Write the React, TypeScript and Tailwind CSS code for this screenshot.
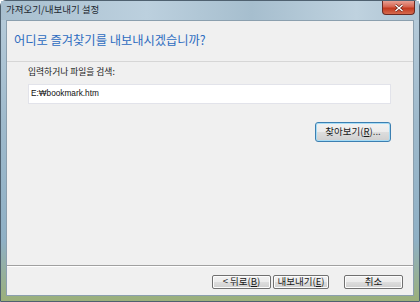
import React from 'react';

const font = { fontFamily: '"Noto Sans CJK KR", "Liberation Sans", sans-serif' };

type BtnProps = { children: React.ReactNode; width: string; focused?: boolean };

const WinButton: React.FC<BtnProps> = ({ children, width, focused }) => (
  <button
    className={
      focused
        ? `${width} h-[20px] rounded-[3px] border border-[#3c7fb1] bg-[linear-gradient(#f2f2f2_0%,#ebebeb_50%,#dddddd_51%,#cfcfcf_100%)] shadow-[inset_0_0_0_1px_#a6dcf6] text-[9.5px] leading-none text-[#1a1a1a] flex items-center justify-center`
        : `${width} h-[14px] rounded-[2px] border border-[#707070] bg-[linear-gradient(#f2f2f2_0%,#ebebeb_50%,#dddddd_51%,#cfcfcf_100%)] shadow-[inset_0_0_0_1px_#fcfcfc] text-[9.5px] leading-none text-[#1a1a1a] flex items-center justify-center`
    }
  >
    {children}
  </button>
);

export default function App() {
  return (
    <div
      style={font}
      className="w-[420px] h-[302px] flex flex-col px-[5px] pb-[5px] rounded-t-[6px] border border-[#4f6170] bg-[linear-gradient(180deg,#b9cddb_0%,#9fbacc_40%,#8fb0c5_80%,#9bb07a_100%)]"
    >
      {/* title bar */}
      <div className="h-[19px] flex items-start -mx-[5px] pl-[5px] pr-[4px] bg-[linear-gradient(90deg,#a8bfcf_0%,#bcd0de_35%,#a6bece_60%,#bfd2df_85%,#aec4d3_100%)]">
        <span className="pt-[4px] text-[9.5px] leading-none text-[#1f2a33]">가져오기/내보내기 설정</span>
        <div className="ml-auto w-[33px] h-[14px] rounded-b-[4px] border border-t-0 border-[#6b2a22] bg-[linear-gradient(#e8a093_0%,#d6644f_45%,#c2391e_55%,#d56a4e_100%)] flex items-center justify-center">
          <svg width="10" height="8" viewBox="0 0 10 8">
            <path d="M1.5 1 L8.5 7 M8.5 1 L1.5 7" stroke="#5a1c12" strokeWidth="2.6" />
            <path d="M1.5 1 L8.5 7 M8.5 1 L1.5 7" stroke="#ffffff" strokeWidth="1.5" />
          </svg>
        </div>
      </div>

      {/* client area */}
      <div className="flex-1 flex flex-col border border-[#8b9fae] bg-[#f0f0f0]">
        <div className="h-[41px] pl-[7px] pt-[5px] border-b border-[#d6d6d6]">
          <span className="text-[12.25px] leading-[16px] text-[#2d6cc0]">어디로 즐겨찾기를 내보내시겠습니까?</span>
        </div>
        <div className="flex-1 flex flex-col pl-[21px] pt-[4px] border-b border-[#a0a0a0]">
          <span className="text-[8.75px] leading-[12px] text-[#1a1a1a]">입력하거나 파일을 검색:</span>
          <div className="mt-[6px] w-[363px] h-[20px] bg-white border border-[#e2e3ea] pl-[2px] flex items-center">
            <span className="text-[8.25px] leading-none text-[#111]" style={{ fontFamily: '"Liberation Sans", "Noto Sans CJK KR", sans-serif' }}>
              E:₩bookmark.htm
            </span>
          </div>
          <div className="w-[363px] flex justify-end mt-[18px]">
            <WinButton width="w-[76px]" focused>
              찾아보기(<span className="underline">R</span>)...
            </WinButton>
          </div>
        </div>
        <div className="h-[29px] border-t border-white flex items-center justify-end pr-[10px] pt-[1px]">
          <WinButton width="w-[59px]">
            &lt; 뒤로(<span className="underline">B</span>)
          </WinButton>
          <div className="w-[2px]" />
          <WinButton width="w-[56px]">
            내보내기(<span className="underline">E</span>)
          </WinButton>
          <div className="w-[15px]" />
          <WinButton width="w-[59px]">취소</WinButton>
        </div>
      </div>
    </div>
  );
}
